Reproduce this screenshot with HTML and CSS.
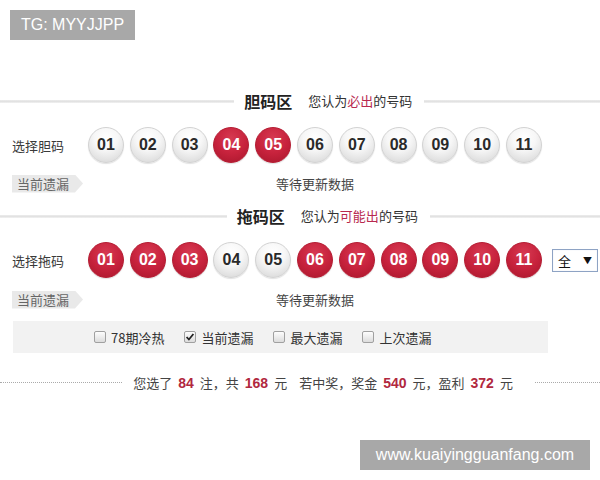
FILE: index.html
```html
<!DOCTYPE html>
<html lang="zh">
<head>
<meta charset="utf-8">
<title>胆拖选号</title>
<link rel="stylesheet" href="styles.css">
</head>
<body>
<div class="badge">TG: MYYJJPP</div>

<main class="main">
  <div class="head">
    <span class="line line-l"></span>
    <span class="title">胆码区</span>
    <span class="sub">您认为<em>必出</em>的号码</span>
    <span class="line line-r"></span>
  </div>
  <div class="row">
    <span class="label">选择胆码</span>
    <div class="balls">
      <span class="ball">01</span><span class="ball">02</span><span class="ball">03</span><span class="ball red">04</span><span class="ball red">05</span><span class="ball">06</span><span class="ball">07</span><span class="ball">08</span><span class="ball">09</span><span class="ball">10</span><span class="ball">11</span>
    </div>
  </div>
  <div class="miss">
    <span class="tag">当前遗漏</span>
    <span class="wait">等待更新数据</span>
  </div>

  <div class="head head2">
    <span class="line line-l"></span>
    <span class="title">拖码区</span>
    <span class="sub">您认为<em>可能出</em>的号码</span>
    <span class="line line-r"></span>
  </div>
  <div class="row row2">
    <span class="label">选择拖码</span>
    <div class="balls">
      <span class="ball red">01</span><span class="ball red">02</span><span class="ball red">03</span><span class="ball">04</span><span class="ball">05</span><span class="ball red">06</span><span class="ball red">07</span><span class="ball red">08</span><span class="ball red">09</span><span class="ball red">10</span><span class="ball red">11</span>
    </div>
    <div class="select"><span>全</span><span class="arrow">▼</span></div>
  </div>
  <div class="miss miss2">
    <span class="tag">当前遗漏</span>
    <span class="wait">等待更新数据</span>
  </div>

  <div class="panel">
    <label class="opt"><span class="cb"></span>78期冷热</label>
    <label class="opt"><span class="cb on"><svg viewBox="0 0 12 12" width="12" height="12"><path d="M2.6 6 L4.9 8.5 L9.4 3" fill="none" stroke="#222" stroke-width="1.8"/></svg></span>当前遗漏</label>
    <label class="opt"><span class="cb"></span>最大遗漏</label>
    <label class="opt"><span class="cb"></span>上次遗漏</label>
  </div>

  <div class="sum">
    <span class="dots dots-l"></span>
    <span class="sumtext">您选了<b>84</b>注，共<b>168</b>元<span class="gap"></span>若中奖，奖金<b>540</b>元，盈利<b>372</b>元</span>
    <span class="dots dots-r"></span>
  </div>
</main>

<div class="mark">www.kuaiyingguanfang.com</div>
</body>
</html>
```

FILE: styles.css
```css
* { box-sizing: border-box; }
html, body { margin: 0; padding: 0; background: #fff; }
body {
  width: 600px;
  height: 480px;
  position: relative;
  overflow: hidden;
  font-family: "Noto Sans CJK SC", "Liberation Sans", sans-serif;
  color: #333;
}

.badge {
  position: absolute;
  left: 10px;
  top: 10px;
  width: 125px;
  height: 30px;
  background: #a8a8a8;
  color: #fff;
  font: 16px/30px "Liberation Sans", Arial, sans-serif;
  text-align: center;
}

.mark {
  position: absolute;
  left: 360px;
  top: 440px;
  width: 230px;
  height: 30px;
  background: #a8a8a8;
  color: #fff;
  font: 16px/30px "Liberation Sans", Arial, sans-serif;
  text-align: center;
}

.main {
  padding-top: 91px;
  display: flex;
  flex-direction: column;
}

.head {
  display: flex;
  align-items: center;
  height: 20px;
}
.head2 { margin-top: 14px; }
.line {
  height: 3px;
  background: linear-gradient(#ececec, #e2e2e2, #f2f2f2);
}
.line-l { flex: 4 1 0; margin-right: 10px; }
.line-r { flex: 3 1 0; margin-left: 12px; margin-top: 1px; }
.title {
  font-size: 16px;
  font-weight: bold;
  color: #222;
  line-height: 20px;
}
.sub {
  margin-left: 16px;
  font-size: 13px;
  line-height: 20px;
  color: #333;
}
.sub em { font-style: normal; color: #b8294f; }

.row {
  display: flex;
  align-items: center;
  margin-top: 16px;
  height: 36px;
  padding-left: 12px;
}
.row2 { margin-top: 16px; }
.label {
  width: 76px;
  font-size: 13px;
  color: #3a3a3a;
}
.balls {
  display: flex;
  gap: 5.8px;
}
.ball {
  width: 36px;
  height: 36px;
  border-radius: 50%;
  display: flex;
  align-items: center;
  justify-content: center;
  font: bold 16px "Liberation Sans", Arial, sans-serif;
  color: #2a2a2a;
  background: radial-gradient(circle at 50% 30%, #ffffff 0%, #f7f7f7 40%, #e2e2e2 75%, #cfcfcf 100%);
  border: 1px solid #d2d2d2;
  box-shadow: 0 1px 1px rgba(0,0,0,0.12);
}
.ball.red {
  color: #fff;
  background: radial-gradient(circle at 50% 30%, #d63a52 0%, #c8233d 50%, #b21a31 85%, #a11629 100%);
  border-color: #b41c32;
}

.select {
  margin-left: 10px;
  width: 46px;
  height: 23px;
  border: 1px solid #8ea3c4;
  background: #fff;
  display: flex;
  align-items: center;
  justify-content: space-between;
  padding: 0 5px 0 5px;
  font-size: 13px;
  color: #111;
  box-shadow: inset 0 0 1px #c8d4e6;
}
.select .arrow { font-size: 9px; color: #111; }

.miss {
  display: grid;
  grid-template-columns: 76px 454px;
  align-items: center;
  margin-top: 11px;
  height: 18px;
  padding-left: 12px;
}
.miss2 { margin-top: 12px; }
.tag {
  width: 71px;
  height: 18px;
  background: #e9e9e9;
  clip-path: polygon(0 0, 63px 0, 71px 50%, 63px 100%, 0 100%);
  font-size: 13px;
  line-height: 18px;
  color: #666;
  padding-left: 5px;
}
.wait {
  text-align: center;
  font-size: 13px;
  color: #444;
}

.panel {
  margin: 13px 0 0 13px;
  width: 535px;
  height: 32px;
  background: #f2f2f2;
  display: flex;
  align-items: center;
  padding-left: 81px;
  gap: 20px;
}
.opt {
  display: flex;
  align-items: center;
  font-size: 13px;
  color: #333;
}
.cb {
  width: 12px;
  height: 12px;
  border: 1px solid #a0a0a0;
  border-radius: 2px;
  background: linear-gradient(#fdfdfd, #dcdcdc);
  margin-right: 5px;
  display: flex;
  overflow: visible;
}
.cb svg { margin: -1px; }

.sum {
  display: flex;
  align-items: center;
  margin-top: 21px;
  height: 16px;
}
.dots {
  border-top: 1px dotted #aaa;
  height: 0;
}
.dots-l { flex: 122 1 0; margin-right: 11px; }
.dots-r { flex: 65 1 0; margin-left: 22px; }
.sumtext {
  font-size: 13px;
  color: #444;
  white-space: nowrap;
}
.sumtext b {
  color: #b1283e;
  margin: 0 6px;
  font: bold 14px "Liberation Sans", Arial, sans-serif;
}
.gap { display: inline-block; width: 12px; }
```
